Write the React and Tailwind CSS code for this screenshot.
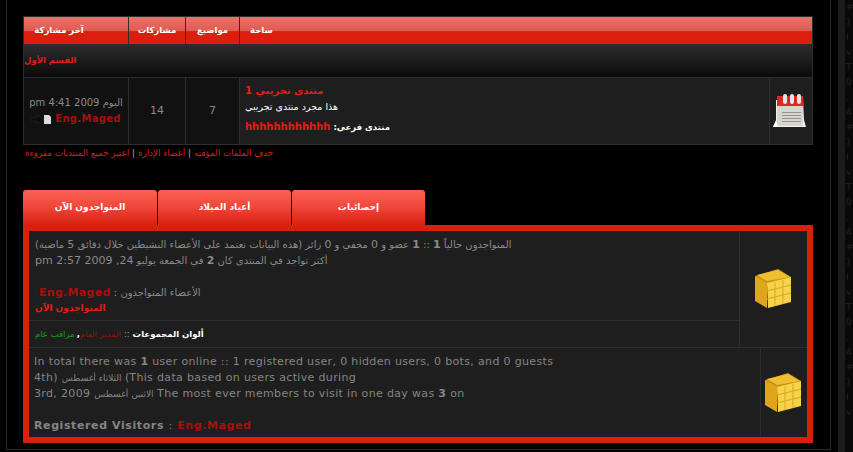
const ar = '"DejaVu Sans", sans-serif';

function CalIcon() {
  return (
    <svg width="34" height="34" viewBox="0 0 34 34">
      <path d="M0 33 L3 26 L3 6 L30 6 L31 26 L33 33 Z" fill="#f2f2ee" />
      <rect x="4" y="6" width="26" height="26" fill="#d6d5cf" />
      <path d="M4 2 L30 2 L31 12 L4 12 Z" fill="#d92a2a" />
      <rect x="10" y="0" width="4" height="10" rx="2" fill="#e6e6e6" />
      <rect x="17" y="0" width="4" height="10" rx="2" fill="#e6e6e6" />
      <rect x="24" y="0" width="4" height="10" rx="2" fill="#e6e6e6" />
      <g stroke="#94948e" strokeWidth="1">
        <path d="M9 18.5H28M9 21.5H28M9 24.5H28M9 27.5H28" />
      </g>
      <path d="M0 33 L3 27 L5 33 Z" fill="#fff" />
    </svg>
  );
}

function CubeIcon() {
  return (
    <svg width="37" height="39" viewBox="0 0 37 39">
      <path d="M1 7 L24 0 L37 8 L13 16 Z" fill="#c8921a" />
      <path d="M1 7 L13 14 L13 39 L1 32 Z" fill="#e0a51c" />
      <path d="M13 14 L37 8 L37 33 L14 39 Z" fill="#f7d445" />
      <path d="M3 6 L24 1 L36 8 L13 12 Z" fill="#eebf30" />
      <g stroke="#dca924" strokeWidth="1" fill="none">
        <path d="M21 13 L21 37M29 11 L29 35M13 22 L37 16M13 30 L37 24" />
      </g>
    </svg>
  );
}

function HeaderCell({ className, children }) {
  return (
    <div dir="rtl" className={`flex items-center justify-center h-[27px] text-white font-bold text-[8.5px] bg-[linear-gradient(#ea736c_0,#dd5c52_50%,#d9200f_54%,#d9200f_100%)] ${className}`}>
      {children}
    </div>
  );
}

function Tab({ children, className }) {
  return (
    <div dir="rtl" className={`h-[35px] pt-[1px] flex items-center justify-center text-white font-bold text-[9px] rounded-t-[3px] bg-[linear-gradient(#fb6054_0,#f0493c_45%,#d9200f_100%)] ${className}`}>
      {children}
    </div>
  );
}

export default function App() {
  return (
    <div className="w-[853px] h-[452px] overflow-hidden bg-black flex" style={{ fontFamily: ar }}>
      <div className="w-[6px] shrink-0" />
      <div className="w-[825px] shrink-0 h-[450px] border-l border-r border-b border-[#2b2b2b] pl-[16px] pr-[16px] pt-[16px]">
        <div className="w-[790px] border border-[#2e2e2e] bg-[#2e2e2e]">
          <div className="flex gap-px">
            <HeaderCell className="w-[104px] pr-[34px]">آخر مشاركة</HeaderCell>
            <HeaderCell className="w-[56px]">مشاركات</HeaderCell>
            <HeaderCell className="w-[53px]">مواضيع</HeaderCell>
            <HeaderCell className="flex-1 pl-[10px]"><span className="mr-auto">ساحة</span></HeaderCell>
          </div>
          <div className="h-[33px] flex items-center bg-[linear-gradient(#2c2c2c_0,#252525_25%,#0a0a0a_100%)] text-[#e31c15] text-[8.5px] font-bold">
            <span dir="rtl">القسم الأول</span>
          </div>
          <div className="flex gap-px mt-px h-[66px]">
            <div className="w-[104px] bg-[#111] flex flex-col justify-center items-center text-[#8a8a8a] text-[10px] leading-[16px]">
              <span dir="rtl" className="whitespace-nowrap">اليوم <span dir="ltr">pm 4:41 2009</span></span>
              <span className="flex items-center gap-[4px] whitespace-nowrap">
                <span className="flex items-center gap-px">
                  <svg width="12" height="9" viewBox="0 0 12 9"><path d="M0 3H6V0L12 4.5L6 9V6H0Z" fill="#0a0a0a" stroke="#333" strokeWidth="0.5" /></svg>
                  <svg width="7" height="9" viewBox="0 0 7 9"><path d="M0 0H5L7 2V9H0Z" fill="#ddd" /></svg>
                </span>
                <span className="text-[#a80f0f] font-bold text-[10px] tracking-[0.3px]">Eng.Maged</span>
              </span>
            </div>
            <div className="w-[56px] bg-[#111] flex items-center justify-center text-[#8a8a8a] text-[11px]">14</div>
            <div className="w-[53px] bg-[#111] flex items-center justify-center text-[#8a8a8a] text-[11px]">7</div>
            <div className="flex-1 bg-[#1e1e1e] pt-[5px] pl-[5px] flex flex-col items-start text-white text-[9.5px]">
              <span dir="rtl" className="text-[#e31c15] font-bold text-[10px] leading-[16px]">منتدى تجريبي 1</span>
              <span dir="rtl" className="leading-[16px]">هذا مجرد منتدى تجريبي</span>
              <span dir="rtl" className="leading-[16px] mt-[4px] font-bold text-[8.5px]">
                منتدى فرعي: <span className="text-[#e31c15] text-[10px]">hhhhhhhhhhhh</span>
              </span>
            </div>
            <div className="w-[42px] bg-[#1e1e1e] flex items-center justify-center pr-[2px]">
              <CalIcon />
            </div>
          </div>
        </div>

        <div className="h-[16px] mt-[1px] pl-[2px] flex items-center text-[#d8201a] text-[8.75px] whitespace-nowrap">
          <span dir="rtl">
            حذف الملفات المؤقته <span className="text-[#4a90c0] font-bold">|</span> أعضاء الإدارة <span className="text-[#4a90c0] font-bold">|</span> اعتبر جميع المنتديات مقروءة
          </span>
        </div>

        <div className="mt-[28px] w-[790px]">
          <div className="flex gap-px">
            <Tab className="w-[134px]">المتواجدون الآن</Tab>
            <Tab className="w-[133px]">أعياد الميلاد</Tab>
            <Tab className="w-[133px]">إحصائيات</Tab>
          </div>
          <div className="h-[218px] border-[6px] border-[#d9200f] bg-[#1e1e1e] text-[#8a8a8a] flex flex-col">
            <div className="h-[116px] flex">
              <div className="flex-1 flex flex-col">
                <div className="h-[90px] pt-[6px] pl-[6px] text-[10px] leading-[16px] border-b border-[#2d2d2d] flex flex-col items-start">
                  <div dir="rtl" className="whitespace-nowrap">المتواجدون حالياً <b className="text-[11px]">1</b> :: <b className="text-[11px]">1</b> عضو و <span className="text-[11px]">0</span> مخفي و <span className="text-[11px]">0</span> زائر (هذه البيانات تعتمد على الأعضاء النشيطين خلال دقائق <span className="text-[11px]">5</span> ماضية)</div>
                  <div dir="rtl" className="whitespace-nowrap">أكثر تواجد في المنتدى كان <b className="text-[11px]">2</b> في الجمعة يوليو <span className="text-[11px]" dir="ltr">pm 2:57 2009 ,24</span></div>
                  <div className="h-[16px]" />
                  <div dir="rtl" className="whitespace-nowrap pl-[4px]">الأعضاء المتواجدون : <b className="text-[#a80f0f] text-[11px] tracking-[0.3px]">Eng.Maged</b></div>
                  <div dir="rtl" className="text-[#e31c15] font-bold text-[9px] leading-[15px]">المتواجدون الآن</div>
                </div>
                <div className="flex-1 flex items-center pl-[6px]">
                  <div dir="rtl" className="text-[8.5px] font-bold whitespace-nowrap">
                    <span className="text-white">ألوان المجموعات</span>
                    <span className="mx-[3px] font-normal text-[#999]">::</span>
                    <span className="text-[#8c1510] font-normal">المدير العام</span>
                    <span className="text-white">,</span>
                    <span className="text-[#12a012] mr-[2px] font-normal">مراقب عام</span>
                  </div>
                </div>
              </div>
              <div className="w-[68px] flex items-center justify-center border-l border-[#2d2d2d] pb-[2px] pr-[2px]">
                <CubeIcon />
              </div>
            </div>
            <div className="h-[1px] bg-[#2d2d2d]" />
            <div className="flex-1 flex">
              <div className="flex-1 pt-[6px] pl-[5px] text-[11px] leading-[16px] tracking-[0.34px] text-[#858585]">
                <div className="whitespace-nowrap">In total there was <b>1</b> user online :: 1 registered user, 0 hidden users, 0 bots, and 0 guests</div>
                <div className="whitespace-nowrap">4th) <span className="text-[9px] tracking-normal">الثلاثاء أغسطس</span> (This data based on users active during</div>
                <div className="whitespace-nowrap">3rd, 2009 <span className="text-[9px] tracking-normal">الاثنين أغسطس</span> The most ever members to visit in one day was <b>3</b> on</div>
                <div className="whitespace-nowrap mt-[16px] font-bold tracking-[0.6px]">Registered Visitors <span className="font-normal">:</span> <span className="text-[#a80f0f]">Eng.Maged</span></div>
              </div>
              <div className="w-[47px] border-l border-[#2d2d2d] flex items-start justify-center pt-[25px] pr-[4px]">
                <CubeIcon />
              </div>
            </div>
          </div>
        </div>
      </div>
      <div className="w-[7px] shrink-0" />
      <div className="w-[7px] shrink-0 bg-[#1c1c1c]" />
      <div className="flex-1 flex flex-col pl-[1px] text-[#242424] text-[9px] leading-[15px] bg-[#090909]">
        {"#]ΙvT0.4#]ΙvT0.4#]ΙvT0.4#]Ιv".split("").map((c, i) => <span key={i}>{c}</span>)}
      </div>
    </div>
  );
}
